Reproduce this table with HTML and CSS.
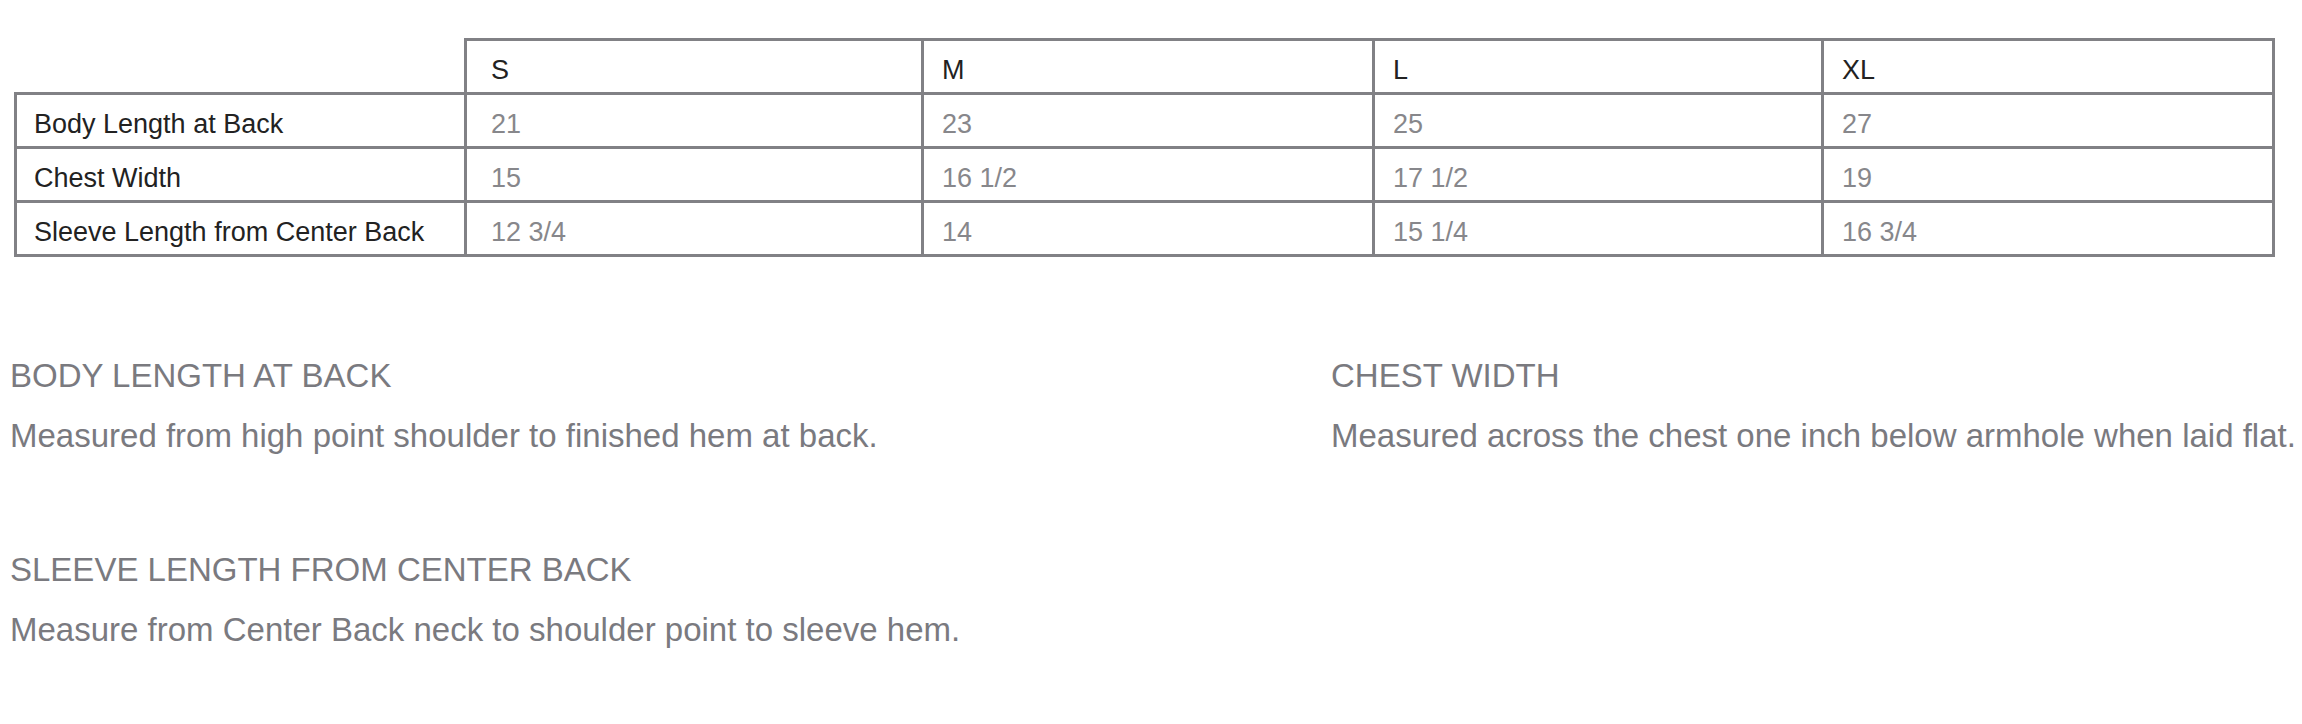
FILE: index.html
```html
<!DOCTYPE html>
<html lang="en">
<head>
<meta charset="utf-8">
<title>Size Chart</title>
<link rel="stylesheet" href="styles.css">
</head>
<body>
<div class="page">
  <table class="sizes">
    <colgroup>
      <col class="col-label">
      <col class="col-s">
      <col class="col-m">
      <col class="col-l">
      <col class="col-xl">
    </colgroup>
    <thead>
      <tr>
        <th class="blank"></th>
        <th>S</th>
        <th>M</th>
        <th>L</th>
        <th>XL</th>
      </tr>
    </thead>
    <tbody>
      <tr>
        <th class="label">Body Length at Back</th>
        <td>21</td><td>23</td><td>25</td><td>27</td>
      </tr>
      <tr>
        <th class="label">Chest Width</th>
        <td>15</td><td>16 1/2</td><td>17 1/2</td><td>19</td>
      </tr>
      <tr>
        <th class="label">Sleeve Length from Center Back</th>
        <td>12 3/4</td><td>14</td><td>15 1/4</td><td>16 3/4</td>
      </tr>
    </tbody>
  </table>

  <div class="notes">
    <div class="note">
      <h3 class="note-title">BODY LENGTH AT BACK</h3>
      <p class="note-text">Measured from high point shoulder to finished hem at back.</p>
    </div>
    <div class="note">
      <h3 class="note-title">CHEST WIDTH</h3>
      <p class="note-text">Measured across the chest one inch below armhole when laid flat.</p>
    </div>
    <div class="note">
      <h3 class="note-title">SLEEVE LENGTH FROM CENTER BACK</h3>
      <p class="note-text">Measure from Center Back neck to shoulder point to sleeve hem.</p>
    </div>
  </div>
</div>
</body>
</html>
```
FILE: styles.css
```css
html, body {
  margin: 0;
  padding: 0;
  background: #ffffff;
}

body {
  font-family: "Liberation Sans", Arial, Helvetica, sans-serif;
}

.page {
  padding: 38px 0 0 10px;
}

.sizes {
  margin-left: 4px;
  width: 2258px;
  table-layout: fixed;
  border-collapse: collapse;
  font-size: 27px;
  line-height: 31px;
}

.col-label { width: 450px; }
.col-s { width: 457px; }
.col-m { width: 451px; }
.col-l { width: 449px; }
.col-xl { width: 451px; }

.sizes th,
.sizes td {
  border: 3px solid #818185;
  padding: 14px 18px 6px 18px;
  text-align: left;
  font-weight: normal;
  white-space: nowrap;
}

.sizes tr > :nth-child(2) {
  padding-left: 24px;
}

.sizes thead th {
  color: #222222;
}

.sizes th.blank {
  border: none;
}

.sizes th.label {
  color: #222222;
  padding-left: 17px;
}

.sizes td {
  color: #87878b;
}

.notes {
  display: grid;
  grid-template-columns: 1321px auto;
  row-gap: 94px;
  margin-top: 99px;
}

.note-title {
  margin: 0;
  font-size: 33px;
  line-height: 40px;
  font-weight: normal;
  color: #7a7a7f;
  white-space: nowrap;
}

.note-text {
  margin: 20px 0 0;
  font-size: 33px;
  line-height: 40px;
  color: #7a7a7f;
  white-space: nowrap;
}
```
